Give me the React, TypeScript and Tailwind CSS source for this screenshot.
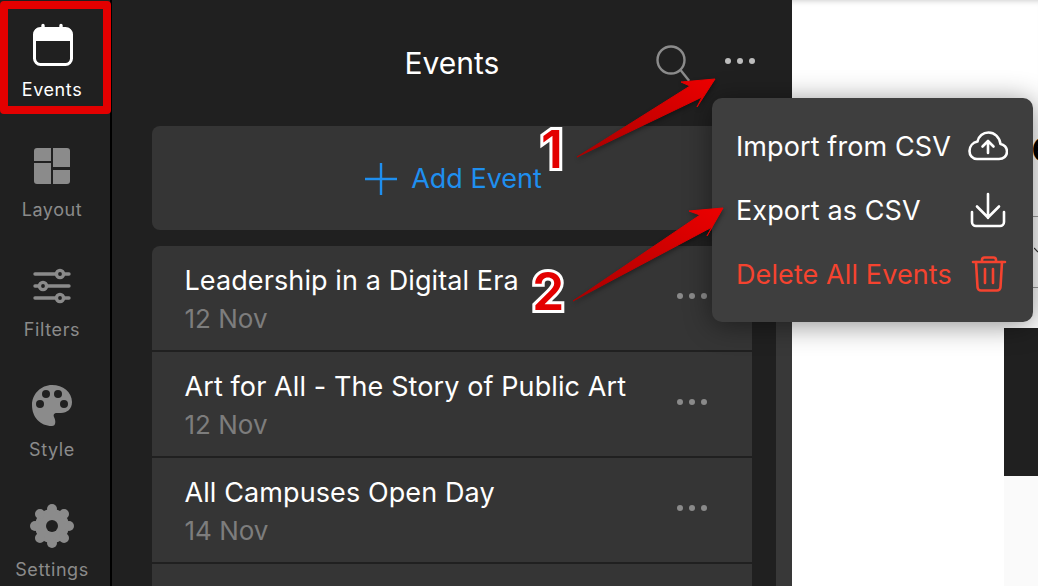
import type { ReactNode } from 'react'

const FONT = "font-['Inter','Noto_Sans',sans-serif]"

function CalendarIcon() {
  return (
    <svg width="48" height="48" viewBox="0 0 48 48" fill="none">
      <rect x="6.5" y="6.5" width="37" height="36" rx="6" stroke="#fff" strokeWidth="3" />
      <path d="M6 19V11a5 5 0 0 1 5-5h28a5 5 0 0 1 5 5v8z" fill="#fff" />
      <path d="M15 3.5v6M33 3.5v6" stroke="#fff" strokeWidth="3.4" strokeLinecap="round" />
    </svg>
  )
}

function LayoutIcon() {
  return (
    <svg width="48" height="48" viewBox="0 0 48 48" fill="#8b8b8b">
      <path d="M9 6h14v13H6V9a3 3 0 0 1 3-3z" />
      <path d="M6 21h17v21H9a3 3 0 0 1-3-3z" />
      <path d="M25 6h14a3 3 0 0 1 3 3v16H25z" />
      <path d="M25 28h17v11a3 3 0 0 1-3 3H25z" />
    </svg>
  )
}

function FiltersIcon() {
  return (
    <svg width="48" height="48" viewBox="0 0 48 48" fill="none" stroke="#8b8b8b">
      <path d="M7 12h34M7 24h34M7 36h34" strokeWidth="3.4" strokeLinecap="round" />
      <circle cx="32" cy="12" r="3.6" fill="#202020" strokeWidth="3.4" />
      <circle cx="15" cy="24" r="3.6" fill="#202020" strokeWidth="3.4" />
      <circle cx="32" cy="36" r="3.6" fill="#202020" strokeWidth="3.4" />
    </svg>
  )
}

function PaletteIcon() {
  return (
    <svg width="48" height="48" viewBox="0 0 48 48">
      <path
        fill="#8b8b8b"
        d="M24 3c11 0 20 7 20 17 0 7-5 11-11 11h-4c-3 0-4 2-3 4 2 4 2 9-2 9C12 44 4 35 4 23 4 12 13 3 24 3z"
      />
      <g fill="#202020">
        <circle cx="18" cy="12" r="4" />
        <circle cx="30" cy="12" r="4" />
        <circle cx="12" cy="22" r="4" />
        <circle cx="36" cy="22" r="4" />
      </g>
    </svg>
  )
}

function GearIcon() {
  const lobes = [0, 45, 90, 135, 180, 225, 270, 315]
  return (
    <svg width="48" height="48" viewBox="0 0 48 48">
      <circle cx="24" cy="24" r="17" fill="#8b8b8b" />
      {lobes.map((a) => (
        <circle key={a} cx="24" cy="7" r="5" fill="#8b8b8b" transform={`rotate(${a} 24 24)`} />
      ))}
      <circle cx="24" cy="24" r="6" fill="#202020" />
    </svg>
  )
}

function NavItem({ icon, label, active }: { icon: ReactNode; label: string; active?: boolean }) {
  return (
    <div className="h-[120px] pt-[22px] flex flex-col items-center">
      <div className="w-12 h-12">{icon}</div>
      <span
        className={`mt-[9px] h-[22px] leading-[22px] text-[18px] tracking-[0.6px] ${active ? 'text-white' : 'text-[#8b8b8b]'}`}
      >
        {label}
      </span>
    </div>
  )
}

function Dots({ color }: { color: string }) {
  return (
    <svg width="30" height="6" viewBox="0 0 30 6" fill={color}>
      <circle cx="3" cy="3" r="3" />
      <circle cx="15" cy="3" r="3" />
      <circle cx="27" cy="3" r="3" />
    </svg>
  )
}

function EventRow({ title, date }: { title: string; date: string }) {
  return (
    <div className="h-[104px] shrink-0 flex items-center justify-between bg-[#353535] pl-[32.5px] pr-[45px]">
      <div className="mt-1">
        <div className="text-[27px] leading-[38px] tracking-[0.1px] text-white">{title}</div>
        <div className="text-[26px] leading-[38px] text-[#7d7d7d]">{date}</div>
      </div>
      <div className="-mt-1 flex">
        <Dots color="#8a8a8a" />
      </div>
    </div>
  )
}

function MenuRow({ label, danger, icon }: { label: string; danger?: boolean; icon: ReactNode }) {
  return (
    <div className={`h-16 flex items-center justify-between ${danger ? 'text-[#f5432f]' : 'text-white'}`}>
      <span className="mt-[2px] text-[27px] tracking-[0.1px]">{label}</span>
      {icon}
    </div>
  )
}

function Arrow({ id, points }: { id: string; points: string }) {
  return (
    <g>
      <defs>
        <linearGradient id={id} x1="0" y1="1" x2="1" y2="0">
          <stop offset="0" stopColor="#a80000" />
          <stop offset="1" stopColor="#ec0000" />
        </linearGradient>
      </defs>
      <polygon points={points} fill={`url(#${id})`} stroke={`url(#${id})`} strokeWidth="1" strokeLinejoin="round" />
    </g>
  )
}

export default function App() {
  return (
    <div className={`relative w-[1038px] h-[586px] overflow-hidden flex bg-white ${FONT}`}>
      <aside className="w-[112px] shrink-0 bg-[#202020] border-r-2 border-black pr-[6px]">
        <NavItem icon={<CalendarIcon />} label="Events" active />
        <NavItem icon={<LayoutIcon />} label="Layout" />
        <NavItem icon={<FiltersIcon />} label="Filters" />
        <NavItem icon={<PaletteIcon />} label="Style" />
        <NavItem icon={<GearIcon />} label="Settings" />
      </aside>

      <main className="w-[680px] shrink-0 bg-[#202020] flex flex-col">
        <header className="h-[126px] shrink-0 grid grid-cols-[1fr_auto_1fr] items-center">
          <div />
          <h1 className="text-[30px] font-normal text-white">Events</h1>
          <div className="flex items-center justify-end gap-[33px] pr-[37px] pb-[4px]">
            <svg width="36" height="38" viewBox="0 0 36 38" fill="none" stroke="#8b8b8b" strokeWidth="2.4" className="mt-[6px]">
              <circle cx="15" cy="15" r="13.5" />
              <path d="M24.5 25l8 10" strokeLinecap="round" />
            </svg>
            <Dots color="#bdbdbd" />
          </div>
        </header>

        <div className="flex-1 flex min-h-0">
          <div className="w-[640px] pl-10 flex flex-col">
            <div className="h-[104px] shrink-0 rounded-lg bg-[#353535] flex items-center justify-center gap-[13px] pl-[2px] text-[#1f8fef]">
              <svg width="34" height="34" viewBox="0 0 34 34" stroke="#1f8fef" strokeWidth="2.4" className="mt-[2px]">
                <path d="M1 17h32M17 1v32" />
              </svg>
              <span className="mt-[2px] text-[27px]">Add Event</span>
            </div>
            <div className="mt-4 flex flex-col gap-[2px] rounded-t-lg overflow-hidden">
              <EventRow title="Leadership in a Digital Era" date="12 Nov" />
              <EventRow title="Art for All - The Story of Public Art" date="12 Nov" />
              <EventRow title="All Campuses Open Day" date="14 Nov" />
              <div className="h-10 shrink-0 bg-[#353535]" />
            </div>
          </div>
          <div className="w-4 ml-6 bg-[#383838]" />
        </div>
      </main>

      <section className="relative flex-1 flex flex-col shadow-[inset_0_6px_6px_-6px_rgba(0,0,0,0.25)]">
        <div className="h-[328px] shrink-0" />
        <div className="flex-1 flex">
          <div className="w-[212px] bg-white" />
          <div className="flex-1 flex flex-col">
            <div className="h-[148px] bg-[#202020]" />
            <div className="flex-1 bg-[#fafafa]" />
          </div>
        </div>
        {/* preview content peeking out behind the menu */}
        <span className="absolute left-[239px] top-[120px] text-[46px] leading-[50px] font-medium text-black">e</span>
        <div className="absolute left-[212px] right-0 top-[216px] h-px bg-[#9c9c9c]" />
        <div className="absolute left-[212px] right-0 top-[287px] h-px bg-[#9c9c9c]" />
        <svg className="absolute left-[242px] top-[247px]" width="4" height="6" viewBox="0 0 4 6" fill="none" stroke="#333" strokeWidth="1.2">
          <path d="M0 1l4 4" />
        </svg>
      </section>

      <div className="absolute left-[712px] top-[98px] w-[321px] rounded-[10px] bg-[#3e3e3e] pl-[24px] pr-[25px] py-4 shadow-[0_3px_28px_rgba(0,0,0,0.45)]">
        <MenuRow
          label="Import from CSV"
          icon={
            <svg width="40" height="30" viewBox="0 0 40 30" fill="none" stroke="#fff" strokeWidth="2.6" strokeLinecap="round" strokeLinejoin="round">
              <path d="M9 28h22c4.500 0 8-3 8-7.500 0-4-3-7-6.500-7.500C31.500 6 26.500 1.500 20.500 1.500 15 1.500 10.500 5 9.500 10.500 5 11.500 1.500 15 1.500 20c0 4.500 3 8 7.500 8z" />
              <path d="M20 22V10M14.500 15.500L20 10l5.500 5.500" />
            </svg>
          }
        />
        <MenuRow
          label="Export as CSV"
          icon={
            <svg width="40" height="36" viewBox="0 0 40 36" fill="none" stroke="#fff" strokeWidth="2.6" strokeLinecap="round" strokeLinejoin="round">
              <path d="M4 20v10a4 4 0 0 0 4 4h24a4 4 0 0 0 4-4V20" />
              <path d="M20 2v24M9 14.500L20 25.500 31 14.500" />
            </svg>
          }
        />
        <MenuRow
          label="Delete All Events"
          danger
          icon={
            <svg width="40" height="36" viewBox="0 0 40 36" fill="none" stroke="#f5432f" strokeWidth="2.6" strokeLinecap="round" strokeLinejoin="round" className="translate-x-px">
              <path d="M4 6h32M13 6V4a2.500 2.500 0 0 1 2.500-2.500h9A2.500 2.500 0 0 1 27 4v2" />
              <path d="M7 6l1.500 25a3.500 3.500 0 0 0 3.500 3.500h16a3.500 3.500 0 0 0 3.500-3.500L33 6" />
              <path d="M16 13v14M24 13v14" />
            </svg>
          }
        />
      </div>

      {/* screenshot annotations */}
      <div className="absolute left-0 top-[1px] w-[111px] h-[113px] rounded-[4px] border-[8px] border-[#e30000]" />
      <svg className="absolute inset-0 pointer-events-none drop-shadow-[1px_2px_2px_rgba(0,0,0,0.35)]" width="1038" height="586">
        <Arrow id="arrow-one" points="577,157 690,86 681,82 715,79 697,107 702,97" />
        <Arrow id="arrow-two" points="573,301 700,215 689,211 723,208 707,236 712,227" />
      </svg>
      <span className="absolute left-[541px] top-[119px] text-[52px] leading-[62px] font-semibold text-[#e30000] [-webkit-text-stroke:6px_white] [paint-order:stroke_fill]">
        1
      </span>
      <span className="absolute left-[532px] top-[261px] text-[52px] leading-[62px] font-semibold text-[#e30000] [-webkit-text-stroke:6px_white] [paint-order:stroke_fill]">
        2
      </span>
    </div>
  )
}
